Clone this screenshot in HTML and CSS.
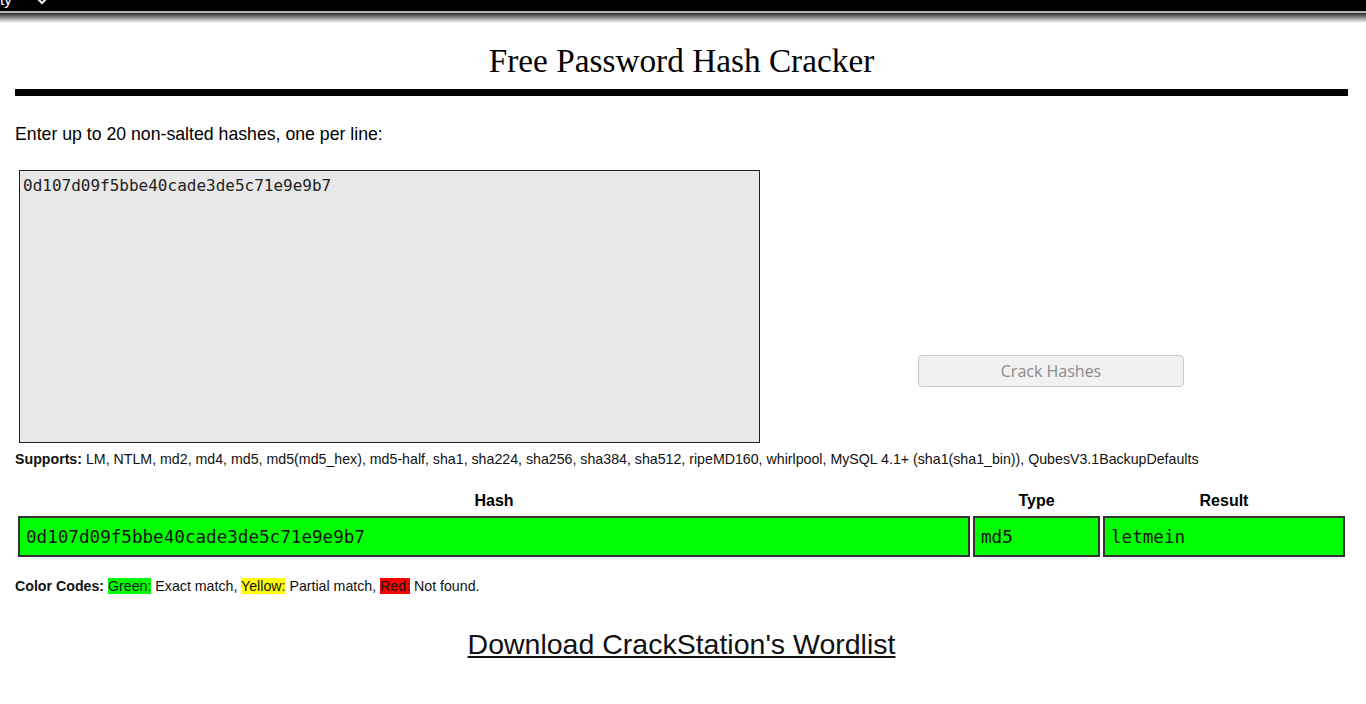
FILE: index.html
```html
<!DOCTYPE html>
<html>
<head>
<meta charset="utf-8">
<link rel="stylesheet" href="styles.css">
</head>
<body>
<div class="topbar">
  <span class="nav-item">ty</span>
  <svg class="chev" width="10" height="6" viewBox="0 0 10 6"><path d="M1 0 L5 4 L9 0" fill="none" stroke="#fff" stroke-width="2"/></svg>
</div>
<div class="topline"></div>
<div class="topfade"></div>
<main class="page">
  <h1 class="title">Free Password Hash Cracker</h1>
  <div class="rule"></div>
  <p class="intro">Enter up to 20 non-salted hashes, one per line:</p>
  <div class="form-row">
    <div class="hashbox">0d107d09f5bbe40cade3de5c71e9e9b7</div>
    <div class="btn-col"><button class="crack">Crack Hashes</button></div>
  </div>
  <p class="supports"><b>Supports:</b> LM, NTLM, md2, md4, md5, md5(md5_hex), md5-half, sha1, sha224, sha256, sha384, sha512, ripeMD160, whirlpool, MySQL 4.1+ (sha1(sha1_bin)), QubesV3.1BackupDefaults</p>
  <table class="results">
    <thead>
      <tr><th class="c-hash">Hash</th><th class="c-type">Type</th><th class="c-res">Result</th></tr>
    </thead>
    <tbody>
      <tr><td>0d107d09f5bbe40cade3de5c71e9e9b7</td><td>md5</td><td>letmein</td></tr>
    </tbody>
  </table>
  <p class="codes"><b>Color Codes:</b> <span class="g">Green:</span> Exact match, <span class="y">Yellow:</span> Partial match, <span class="r">Red:</span> Not found.</p>
  <p class="dl"><a href="#">Download CrackStation's Wordlist</a></p>
</main>
</body>
</html>
```
FILE: styles.css
```css
html, body { margin: 0; padding: 0; background: #fff; }
body { font-family: "Liberation Sans", Arial, sans-serif; color: #000; }
.topbar { height: 11px; background: #000; position: relative; overflow: hidden; }
.nav-item { position: absolute; left: 0; top: -8px; color: #fff; font-size: 15px; line-height: 15px; }
.chev { position: absolute; left: 37px; top: -1px; }
.topline { height: 2px; background: #b5b5b5; }
.topfade { height: 10px; background: linear-gradient(#2a2a2a, #fff); }
.page { padding: 0 18px 0 15px; }
.title { font-family: "Liberation Serif", "Times New Roman", serif; font-weight: normal; font-size: 33.3px; text-align: center; margin: 18px 0 0; line-height: 40px; }
.rule { height: 7px; background: #000; margin-top: 8px; }
.intro { font-size: 17.7px; margin: 28px 0 0; line-height: 20px; }
.form-row { display: flex; align-items: flex-end; margin-top: 26px; }
.hashbox { margin-left: 4px; width: 734px; height: 263px; border: 1px solid #222; background: #e8e8e8; font-family: "DejaVu Sans Mono", monospace; font-size: 16px; padding: 4px 2px 4px 3px; line-height: 21px; color: #222; }
.btn-col { flex: 1; display: flex; justify-content: flex-end; padding-right: 164px; padding-bottom: 56px; }
.crack { width: 266px; height: 32px; border: 1px solid #c8c8c8; border-radius: 4px; background: #f1f1f1; color: #8a8a8a; font-family: "Open Sans", sans-serif; font-size: 16px; padding: 0; }
.supports { font-size: 14.2px; margin: 7px 0 0; line-height: 18px; color: #111; }
.results { width: 1333px; margin-top: 21px; margin-left: 0; border-spacing: 3px 3px; border-collapse: separate; }
.results th { font-size: 16px; font-weight: bold; line-height: 18px; padding: 0 0 3px; }
.c-hash { width: 952px; }
.c-type { width: 127px; }
.results td { background: #00ff00; border: 2px solid #333; font-family: "DejaVu Sans Mono", monospace; font-size: 17.6px; height: 37px; padding: 0 0 0 6px; color: #111; }
.codes { font-size: 14.2px; margin: 17px 0 0; line-height: 18px; color: #111; }
.g { background: #00ff00; }
.y { background: #ffff00; }
.r { background: #ff0000; }
.dl { text-align: center; font-size: 28.5px; margin: 32px 0 0; line-height: 34px; }
.dl a { color: #111; text-decoration: underline; }
```
